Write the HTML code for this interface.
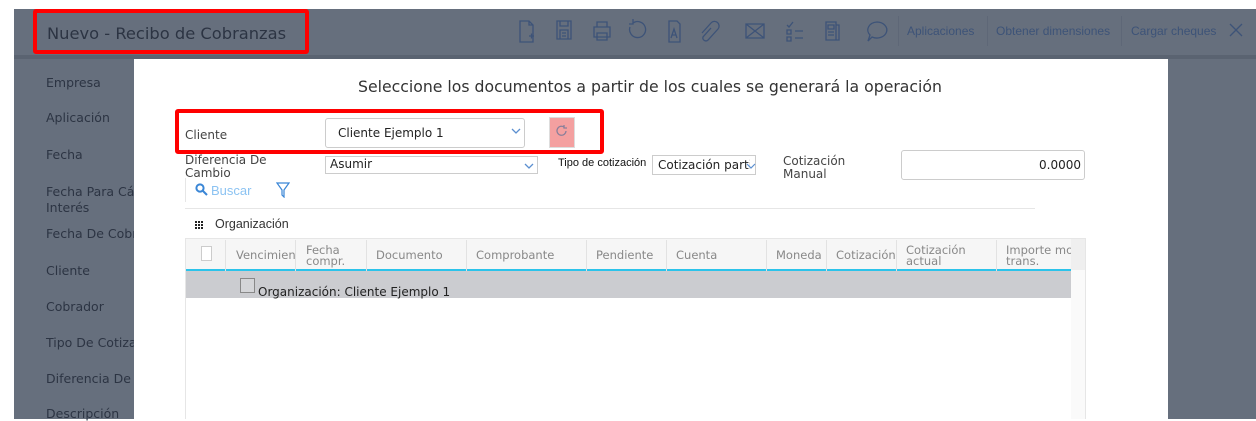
<!DOCTYPE html>
<html><head><meta charset="utf-8"><style>
*{margin:0;padding:0;box-sizing:border-box}
body{width:1256px;height:419px;overflow:hidden;background:#fff;position:relative;font-family:"Liberation Sans","DejaVu Sans",sans-serif}
.a{position:absolute}
.ov{background:#666f7d}
.side{font-family:"DejaVu Sans",sans-serif;font-size:12.5px;color:#2c3443;left:46px}
.red{border:4px solid #f00;border-radius:3px}
.tb{color:#3d5378;font-size:12px;top:24px}
.sep{width:1px;height:30px;background:#5e6777;top:16px}
.hd{font-family:"DejaVu Sans",sans-serif;font-size:11.5px;color:#888;line-height:11px}
.cb{width:1px;height:31px;background:#e2e2e2;top:240px}
.lbl{font-family:"DejaVu Sans",sans-serif;font-size:12px;color:#444;line-height:13px}
</style></head><body>
<div class="a ov" style="left:14px;top:9px;width:1242px;height:410px"></div>
<div class="a" style="left:14px;top:55px;width:1242px;height:4px;background:#5a6371"></div>
<div class="a red" style="left:33px;top:9px;width:276px;height:45px"></div>
<div class="a" style="left:47px;top:24px;font-family:'DejaVu Sans',sans-serif;font-size:16.3px;color:#2c3443">Nuevo - Recibo de Cobranzas</div>
<svg class="a" style="left:515px;top:18px" width="380" height="26" fill="none" stroke="#3d5378" stroke-width="1.3">
<path d="M5 3h9l4 4v17H5z M14 3v4h4 M14 18h5 M16.5 15.5v5"/>
<path d="M42 3h14v18H42z M45 3v5h8V3 M45 12h8v9h-8z M47 15h4 M47 18h4"/>
<path d="M79 9h16v10H79z M82 9V4h10v5 M82 15h10v7H82z"/>
<path d="M118 5a8 8 0 1 1-3 4 M118 1v5h-4"/>
<path d="M154 3h8l3 3v18h-11z M156 20l3-9 3 9 M157 17h4"/>
<path d="M196 10l-8 9a3 3 0 0 0 5 3l10-11a4.5 4.5 0 0 0-7-6l-9 10"/>
<path d="M231 6h18v14H231z M231 6l18 14 M249 6l-18 14"/>
<path d="M272 7l2 2 4-5 M272 12h4v4h-4z M272 19h4v4h-4z M280 13h8 M280 20h8" />
<path d="M311 4h10v18h-10z M313 7h6v4h-6z M313 14h6 M313 17h6 M321 7h3v15h-3"/>
<path d="M362 4a10 8 0 1 1-5 15l-4 4 2-6a10 8 0 0 1 7-13z"/>
</svg>
<div class="a sep" style="left:898px"></div>
<div class="a tb" style="left:907px">Aplicaciones</div>
<div class="a sep" style="left:987px"></div>
<div class="a tb" style="left:996px">Obtener dimensiones</div>
<div class="a sep" style="left:1121px"></div>
<div class="a tb" style="left:1131px">Cargar cheques</div>
<svg class="a" style="left:1229px;top:23px" width="14" height="14" stroke="#3d5378" stroke-width="1.3"><path d="M1 1l12 12M13 1L1 13"/></svg>
<div class="a side" style="top:75px">Empresa</div>
<div class="a side" style="top:110px">Aplicación</div>
<div class="a side" style="top:147px">Fecha</div>
<div class="a side" style="top:184px;line-height:16px">Fecha Para Cálculo<br>Interés</div>
<div class="a side" style="top:226px">Fecha De Cobro</div>
<div class="a side" style="top:263px">Cliente</div>
<div class="a side" style="top:299px">Cobrador</div>
<div class="a side" style="top:335px">Tipo De Cotización</div>
<div class="a side" style="top:371px">Diferencia De Cambio</div>
<div class="a side" style="top:406px">Descripción</div>
<div class="a" style="left:134px;top:59px;width:1034px;height:360px;background:#fff"></div>
<div class="a" style="left:358px;top:77px;font-family:'DejaVu Sans',sans-serif;font-size:15.7px;color:#333">Seleccione los documentos a partir de los cuales se generará la operación</div>
<div class="a red" style="left:175px;top:109px;width:429px;height:45px"></div>
<div class="a lbl" style="left:185px;top:129px">Cliente</div>
<div class="a" style="left:325px;top:118px;width:200px;height:30px;border:1px solid #ccc;border-radius:3px"></div>
<div class="a" style="left:338px;top:126px;font-family:'DejaVu Sans',sans-serif;font-size:12px;color:#222">Cliente Ejemplo 1</div>
<svg class="a" style="left:510px;top:127px" width="12" height="8" fill="none" stroke="#5b8fd0" stroke-width="1.3"><path d="M2 2l4 4 4-4"/></svg>
<div class="a" style="left:549px;top:117px;width:26px;height:31px;background:#f4a0a0;border:1px solid #ddd"></div>
<svg class="a" style="left:554px;top:123px" width="16" height="16" fill="none" stroke="#8a7f9a" stroke-width="1.3"><path d="M12 8a4.5 4.5 0 1 1-2-4 M10 2v3h3"/></svg>
<div class="a lbl" style="left:185px;top:154px">Diferencia De<br>Cambio</div>
<div class="a" style="left:325px;top:156px;width:213px;height:18px;border:1px solid #ccc"></div>
<div class="a" style="left:330px;top:157px;font-family:'DejaVu Sans',sans-serif;font-size:12px;color:#222">Asumir</div>
<svg class="a" style="left:523px;top:162px" width="12" height="8" fill="none" stroke="#5b8fd0" stroke-width="1.3"><path d="M2 2l4 4 4-4"/></svg>
<div class="a" style="left:558px;top:157px;font-size:11px;color:#111">Tipo de cotización</div>
<div class="a" style="left:652px;top:155px;width:104px;height:20px;border:1px solid #ccc;overflow:hidden"></div>
<div class="a" style="left:658px;top:158px;font-family:'DejaVu Sans',sans-serif;font-size:12px;color:#222;width:92px;overflow:hidden;white-space:nowrap">Cotización partic</div>
<svg class="a" style="left:746px;top:162px" width="10" height="8" fill="none" stroke="#5b8fd0" stroke-width="1.2"><path d="M1 2l4 4 4-4"/></svg>
<div class="a lbl" style="left:783px;top:155px">Cotización<br>Manual</div>
<div class="a" style="left:901px;top:150px;width:184px;height:30px;border:1px solid #ccc;border-radius:3px"></div>
<div class="a" style="left:1000px;top:158px;width:81px;text-align:right;font-family:'DejaVu Sans',sans-serif;font-size:12px;color:#222">0.0000</div>
<div class="a" style="left:185px;top:178px;width:1px;height:24px;background:#e6e6e6"></div>
<svg class="a" style="left:195px;top:183px" width="13" height="13" fill="none" stroke="#3a86d6" stroke-width="2"><circle cx="5" cy="5" r="3.6"/><path d="M8 8l4 4"/></svg>
<div class="a" style="left:211px;top:183px;font-size:13px;color:#8cc3f2">Buscar</div>
<svg class="a" style="left:276px;top:182px" width="14" height="16" fill="none" stroke="#3a86d6" stroke-width="1.2"><path d="M1 1h12L8 8v7l-2-2V8z"/></svg>
<div class="a" style="left:185px;top:208px;width:850px;height:1px;background:#e6e6e6"></div>
<svg class="a" style="left:195px;top:221px" width="8" height="8" fill="#222"><rect x="0" y="0" width="2" height="2"/><rect x="3" y="0" width="2" height="2"/><rect x="6" y="0" width="2" height="2"/><rect x="0" y="3" width="2" height="2"/><rect x="3" y="3" width="2" height="2"/><rect x="6" y="3" width="2" height="2"/><rect x="0" y="6" width="2" height="2"/><rect x="3" y="6" width="2" height="2"/><rect x="6" y="6" width="2" height="2"/></svg>
<div class="a" style="left:215px;top:217px;font-size:12.5px;color:#333">Organización</div>
<div class="a" style="left:185px;top:238px;width:901px;height:181px;border:1px solid #e6e6e6;border-bottom:none;background:#fafafa"></div>
<div class="a" style="left:186px;top:239px;width:885px;height:180px;background:#fff"></div>
<div class="a" style="left:186px;top:239px;width:899px;height:31px;background:#f6f6f6"></div>
<div class="a" style="left:1071px;top:239px;width:14px;height:31px;background:#efefef"></div>
<div class="a" style="left:186px;top:269px;width:885px;height:2px;background:#2bc3ea"></div>
<div class="a" style="left:186px;top:271px;width:885px;height:27px;background:#cbccd0"></div>
<div class="a" style="left:201px;top:246px;width:11px;height:15px;border:1px solid #ccc;background:#fff"></div>
<div class="a cb" style="left:225px"></div><div class="a cb" style="left:295px"></div><div class="a cb" style="left:366px"></div><div class="a cb" style="left:466px"></div><div class="a cb" style="left:586px"></div><div class="a cb" style="left:666px"></div><div class="a cb" style="left:766px"></div><div class="a cb" style="left:826px"></div><div class="a cb" style="left:896px"></div><div class="a cb" style="left:996px"></div>
<div class="a hd" style="left:236px;top:250px;width:59px;overflow:hidden;white-space:nowrap">Vencimiento</div>
<div class="a hd" style="left:306px;top:245px">Fecha<br>compr.</div>
<div class="a hd" style="left:376px;top:250px">Documento</div>
<div class="a hd" style="left:476px;top:250px">Comprobante</div>
<div class="a hd" style="left:596px;top:250px">Pendiente</div>
<div class="a hd" style="left:676px;top:250px">Cuenta</div>
<div class="a hd" style="left:776px;top:250px">Moneda</div>
<div class="a hd" style="left:836px;top:250px">Cotización</div>
<div class="a hd" style="left:906px;top:245px">Cotización<br>actual</div>
<div class="a hd" style="left:1006px;top:245px;width:65px;overflow:hidden;white-space:nowrap">Importe mon<br>trans.</div>
<div class="a" style="left:240px;top:278px;width:15px;height:15px;border:1px solid #888;background:#d4d5d8"></div>
<div class="a" style="left:258px;top:285px;font-family:'DejaVu Sans',sans-serif;font-size:12px;color:#222">Organización: Cliente Ejemplo 1</div>
</body></html>
